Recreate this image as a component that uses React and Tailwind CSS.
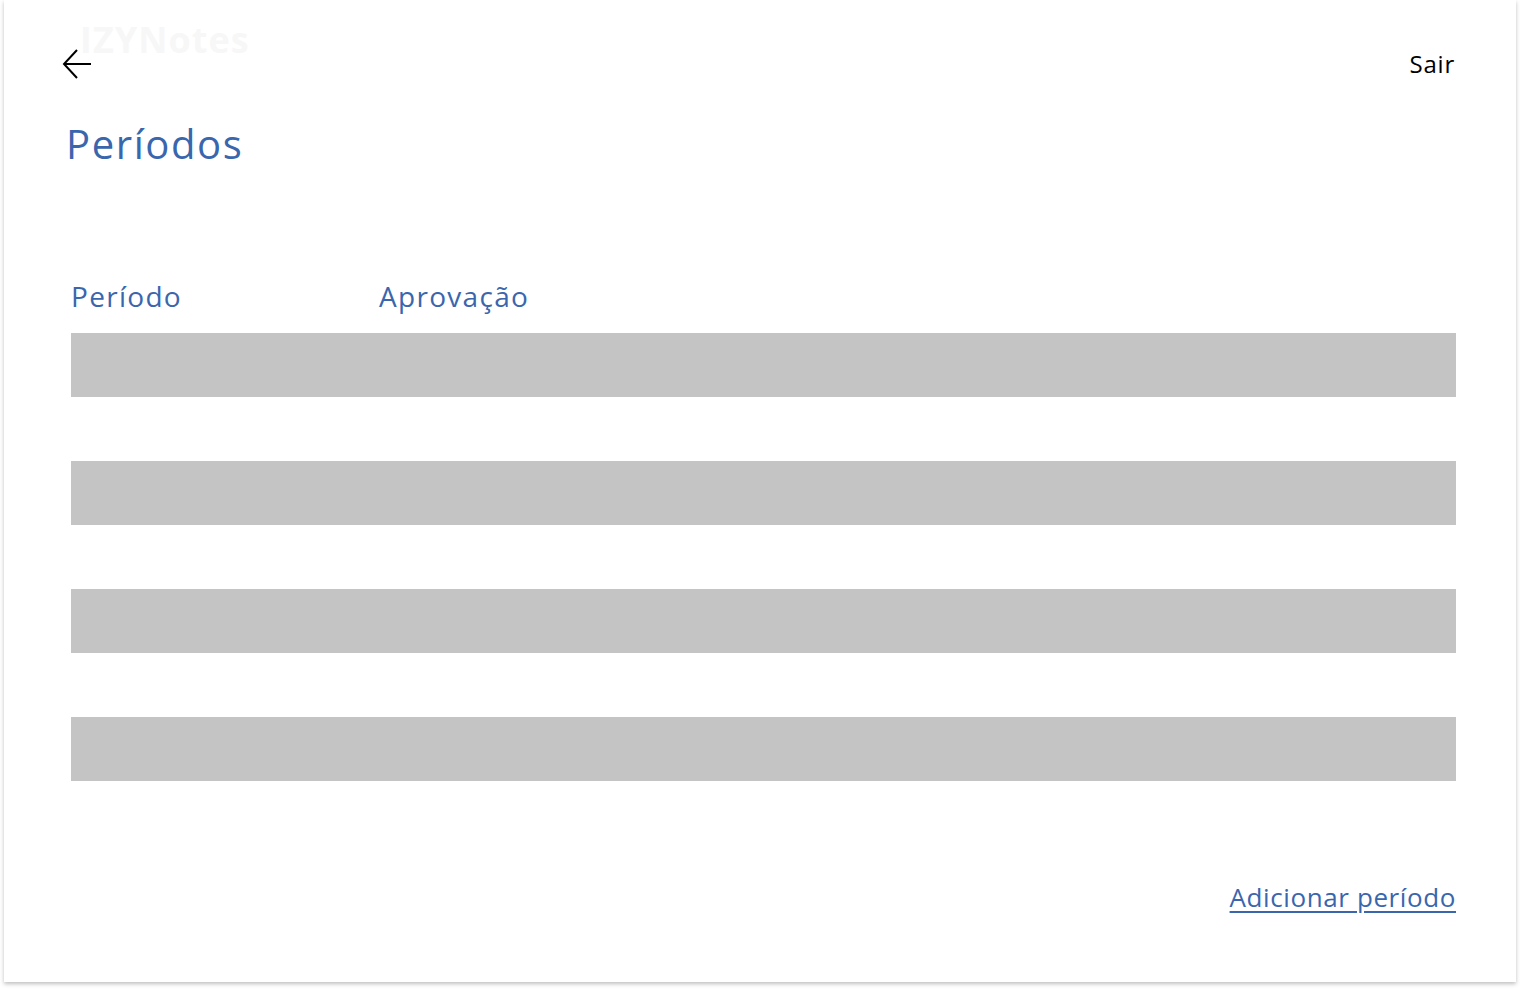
export default function App() {
  const rows = [1, 2, 3, 4];

  return (
    <div className="min-h-screen bg-white px-[4px] font-['Open_Sans',sans-serif]">
      <div className="relative h-[982px] bg-white shadow-[0_2px_4px_rgba(0,0,0,0.25)] flex flex-col">
        {/* logo quase invisível */}
        <div className="absolute left-[76px] top-[13px] text-[36px] font-bold tracking-[1px] text-[#f7f7f7] select-none">
          IZYNotes
        </div>

        {/* Header */}
        <div className="relative flex items-center justify-between pl-[56px] pr-[61px] pt-[46px]">
          <button className="text-black">
            <svg width="34" height="34" viewBox="0 0 34 34" fill="none" stroke="currentColor" strokeWidth="2">
              <path d="M31 17H5" />
              <path d="M17 3L4 17l13 14" />
            </svg>
          </button>
          <button className="text-[24px] tracking-[0.8px] text-black">Sair</button>
        </div>

        <h1 className="relative pl-[62px] mt-[42px] text-[40px] tracking-[1.6px] text-[#3a66ae] leading-none">
          Períodos
        </h1>

        {/* Tabela */}
        <div className="pl-[67px] pr-[60px] mt-[118px]">
          <div className="flex text-[28px] tracking-[1.3px] text-[#3a66ae] leading-none">
            <div className="w-[308px]">Período</div>
            <div>Aprovação</div>
          </div>
          <div className="mt-[23px] flex flex-col gap-[64px]">
            {rows.map((r) => (
              <div key={r} className="h-[64px] bg-[#c4c4c4]" />
            ))}
          </div>
        </div>

        <div className="flex justify-end pr-[60px] mt-[103px]">
          <a href="#" className="text-[26px] tracking-[0.6px] leading-none text-[#3a66ae] underline underline-offset-4">
            Adicionar período
          </a>
        </div>
      </div>
    </div>
  );
}
